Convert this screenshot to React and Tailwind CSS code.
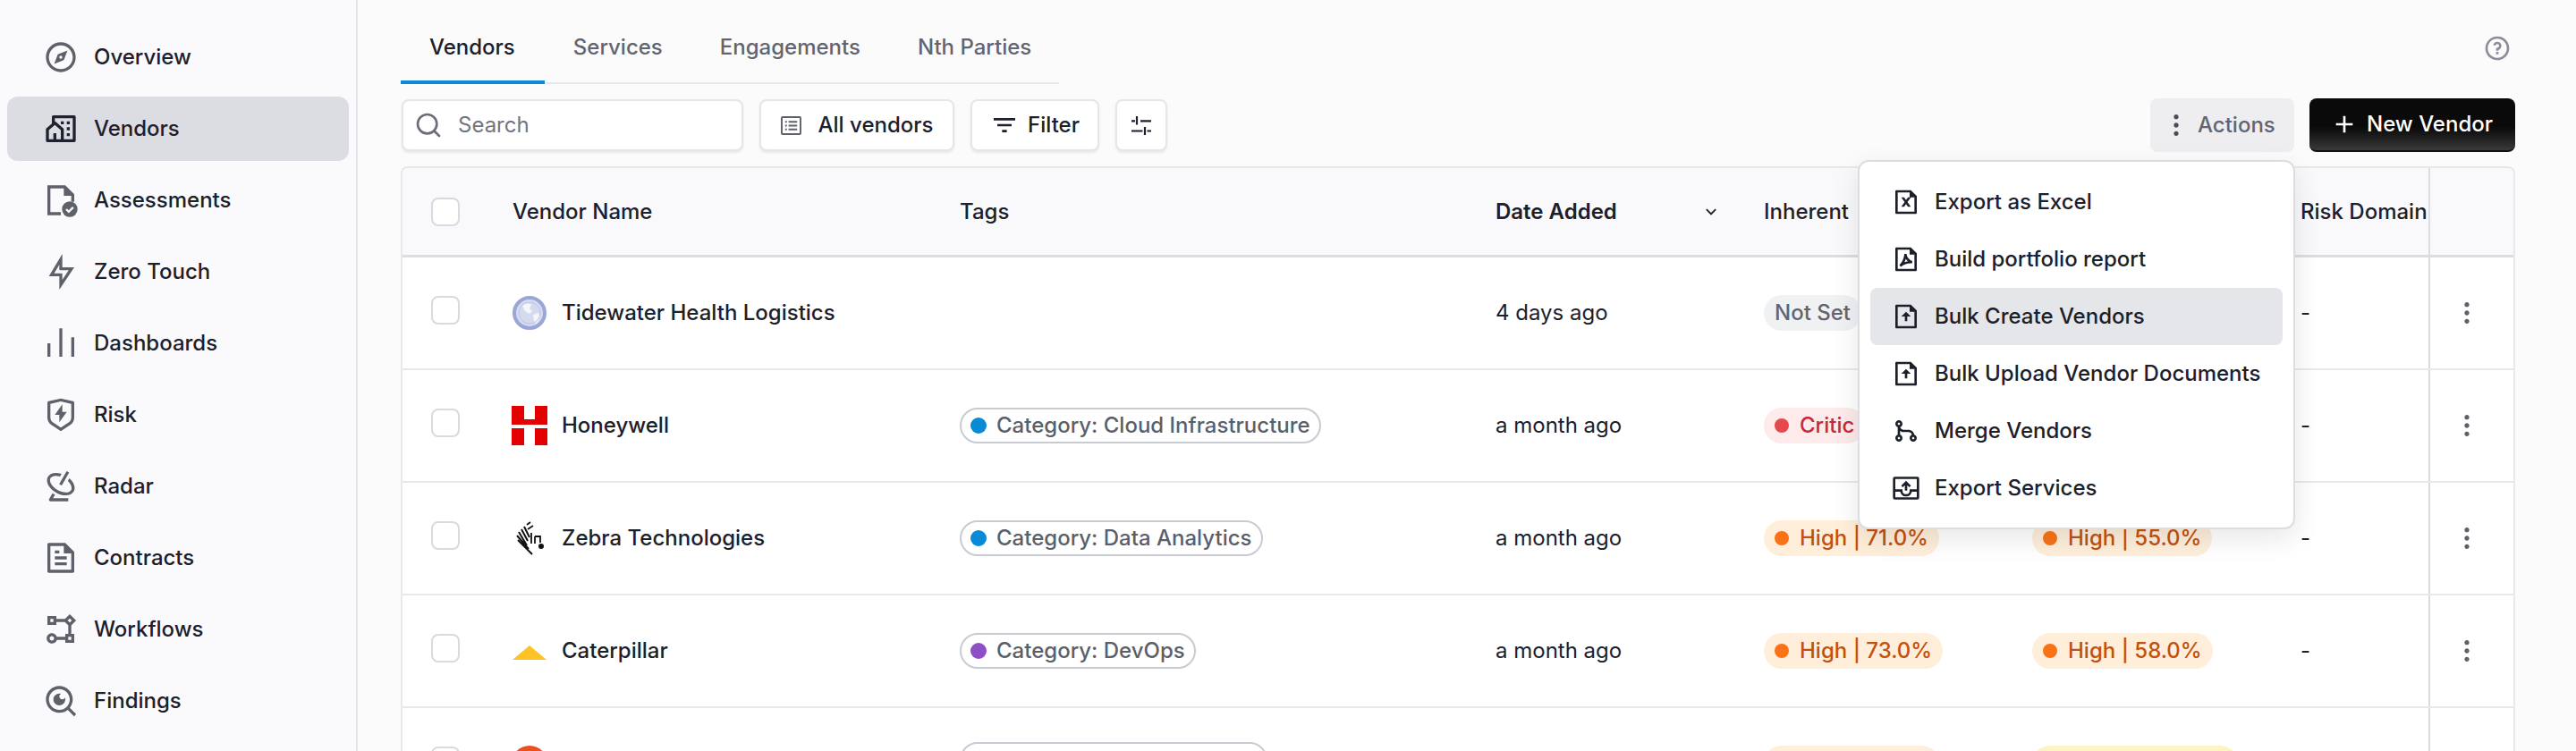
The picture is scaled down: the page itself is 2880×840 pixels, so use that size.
import React from "react";
import {
  RiCompass3Line, RiCommunityLine, RiFlashlightLine, RiBarChartLine, RiShieldFlashLine, RiRadarLine,
  RiFileTextLine, RiFlowChart, RiSearchEyeLine, RiFilter3Line,
  RiMore2Fill, RiAddLine, RiQuestionLine, RiArrowDownSLine, RiFileExcelLine, RiFilePdf2Line, RiFileUploadLine,
  RiGitMergeLine,
} from "react-icons/ri";
import { Search } from "lucide-react";

function AssessIcon({ className }) {
  return (
    <svg viewBox="0 0 24 24" className={className} fill="currentColor">
      <path d="M15 2l6 6v5h-2V9h-5V4H5v16h7v2H3V2z" />
      <circle cx="18" cy="18" r="5.2" />
      <path d="M15.6 18l1.7 1.7 3-3" fill="none" stroke="#fafafc" strokeWidth="1.4" />
    </svg>
  );
}

function ListBox({ className }) {
  return (
    <svg viewBox="0 0 24 22" className={className} fill="none" stroke="currentColor" strokeWidth="2">
      <rect x="1" y="1" width="22" height="20" rx="1" />
      <path d="M9 6.5h10M9 11h10M9 15.5h10" />
      <path d="M5 6.5h2M5 11h2M5 15.5h2" />
    </svg>
  );
}

function Sliders({ className }) {
  return (
    <svg viewBox="0 0 22 21" className={className} fill="none" stroke="currentColor" strokeWidth="2.2">
      <path d="M6 0v9.5M0 5.3h4M10 5.3h12" />
      <path d="M15 12v9M0 16.5h12.5M17.5 16.5H22" />
    </svg>
  );
}

function ExportBox({ className }) {
  return (
    <svg viewBox="0 0 24 24" className={className} fill="none" stroke="currentColor" strokeWidth="2">
      <rect x="2" y="3.4" width="20" height="17.2" rx="0.6" />
      <path d="M2 14h6a4 4 0 0 0 8 0h6" />
      <path d="M12 14V7.5M8.6 10.6L12 7.2l3.4 3.4" />
    </svg>
  );
}

const nav = [
  ["Overview", RiCompass3Line],
  ["Vendors", RiCommunityLine, true],
  ["Assessments", AssessIcon],
  ["Zero Touch", RiFlashlightLine],
  ["Dashboards", RiBarChartLine],
  ["Risk", RiShieldFlashLine],
  ["Radar", RiRadarLine],
  ["Contracts", RiFileTextLine],
  ["Workflows", RiFlowChart],
  ["Findings", RiSearchEyeLine],
];

const menu = [
  ["Export as Excel", RiFileExcelLine],
  ["Build portfolio report", RiFilePdf2Line],
  ["Bulk Create Vendors", RiFileUploadLine, true],
  ["Bulk Upload Vendor Documents", RiFileUploadLine],
  ["Merge Vendors", RiGitMergeLine],
  ["Export Services", ExportBox],
];

function Globe() {
  return (
    <svg viewBox="0 0 40 40" className="w-[40px] h-[40px]">
      <circle cx="20" cy="20" r="17" fill="#d5dbef" stroke="#9aa6d6" strokeWidth="4" />
      <path d="M12 12c4-3 8-3 10-1l-2 4 3 3-3 3-5-3zM24 22l6-2 2 4-4 8-3-3z" fill="#f4f6fb" />
      <circle cx="20" cy="20" r="12" fill="none" stroke="#bcc5e6" strokeWidth="1" />
    </svg>
  );
}
function HoneywellLogo() {
  return (
    <svg viewBox="0 0 40 44" className="w-[40px] h-[44px]">
      <path d="M0 0h14v15h12V0h14v21H0z" fill="#e30000" />
      <path d="M0 25h14v19H0zM26 25h14v19H26z" fill="#e30000" />
    </svg>
  );
}
function ZebraLogo() {
  return (
    <svg viewBox="0 0 40 40" className="w-[40px] h-[40px]">
      <g stroke="#111" fill="none" strokeWidth="2">
        <path d="M7 22l16 16M6 17l13 15M8 13l9 15M11 10l7 13M14 7l6 12" />
        <path d="M17 5l4-3M18 10l6-4M22 14v12M26 18v8M26 18h6v7" strokeWidth="1.8" />
      </g>
      <circle cx="33" cy="29" r="3" fill="#111" />
    </svg>
  );
}
function CatLogo() {
  return (
    <svg viewBox="0 0 40 44" className="w-[40px] h-[44px]">
      <path d="M20 16L39 32H1z" fill="#fdc223" />
    </svg>
  );
}
function OrangeLogo() {
  return (
    <svg viewBox="0 0 40 44" className="w-[40px] h-[44px]">
      <circle cx="20" cy="22" r="20" fill="#ef4e23" />
    </svg>
  );
}

function Check({ nudge }) {
  return <span className={"block w-[32px] h-[32px] rounded-lg border-2 border-[#d9dae0] bg-white " + (nudge ? "mb-[6px]" : "")} />;
}

function Tag({ color, text, width }) {
  return (
    <span
      className="inline-flex items-center h-[40px] rounded-full border-2 border-[#c9cbd3] pl-[10px] pr-[10px] text-[#5b5f6a] gap-[11px] whitespace-nowrap font-medium"
      style={width ? { width } : undefined}
    >
      {color && <span className={"w-[18px] h-[18px] rounded-full " + color} />}
      {text}
    </span>
  );
}

function Risk({ kind, text, width }) {
  const styles = {
    none: ["bg-[#f0f1f3] text-[#62656f]", ""],
    crit: ["bg-[#fdeaea] text-[#c9283a]", "bg-[#e5484d]"],
    high: ["bg-[#feeeda] text-[#c2510c]", "bg-[#f97316]"],
    med: ["bg-[#fef3c2] text-[#b7791f]", "bg-[#eab308]"],
  }[kind];
  return (
    <span
      className={"inline-flex items-center h-[40px] rounded-full px-[12px] gap-[12px] whitespace-nowrap font-medium " + styles[0]}
      style={width ? { width } : undefined}
    >
      {styles[1] && <span className={"w-[16px] h-[16px] rounded-full shrink-0 " + styles[1]} />}
      {text}
    </span>
  );
}

const rows = [
  { name: "Tidewater Health Logistics", Logo: Globe, date: "4 days ago", a: ["none", "Not Set"], dash: true },
  { name: "Honeywell", Logo: HoneywellLogo, tag: ["bg-[#0a8ad6]", "Category: Cloud Infrastructure"], date: "a month ago", a: ["crit", "Critic"], dash: true },
  { name: "Zebra Technologies", Logo: ZebraLogo, tag: ["bg-[#0a8ad6]", "Category: Data Analytics"], date: "a month ago", a: ["high", "High | 71.0%"], b: ["high", "High | 55.0%"], dash: true },
  { name: "Caterpillar", Logo: CatLogo, tag: ["bg-[#8e4ec6]", "Category: DevOps"], date: "a month ago", a: ["high", "High | 73.0%"], b: ["high", "High | 58.0%"], dash: true },
  { name: "", Logo: OrangeLogo, tagWidth: 344, date: "", a: ["high", "", 196], b: ["med", "", 230] },
];

const cols = "grid grid-cols-[123px_500px_599px_300px_300px_300px_143px_95px]";

export default function App() {
  return (
    <div className="flex h-[840px] overflow-hidden bg-[#fbfbfc] text-[24px] text-[#1c202b] font-['Inter',sans-serif] leading-[32px]">
      <aside className="w-[400px] shrink-0 h-full bg-[#fafafc] border-r-2 border-[#e4e4ea] pt-[28px] pl-[8px] pr-[8px] flex flex-col gap-[8px]">
        {nav.map(([label, Icon, active]) => (
          <div key={label} className={"flex items-center h-[72px] shrink-0 rounded-xl pl-[40px] gap-[17px] font-medium " + (active ? "bg-[#dcdde3]" : "")}>
            <Icon className={"w-[40px] h-[40px] " + (active ? "text-[#1f2330]" : "text-[#5e6169]")} />
            <span>{label}</span>
          </div>
        ))}
      </aside>

      <main className="relative flex-1 min-w-0 pl-[48px]">
        <div className="flex items-start justify-between pr-[68px]">
          <div className="flex w-[736px] h-[94px] pt-[16px] border-b-2 border-[#e8e8ec]">
            {["Vendors", "Services", "Engagements", "Nth Parties"].map((t, i) => (
              <div key={t} className={"-mb-[2px] h-[78px] flex items-center pl-[32px] border-b-4 font-medium whitespace-nowrap " + (i === 0 ? "pr-[33px] border-[#0a8ad6] text-[#1c202b]" : "pr-[32px] border-transparent text-[#62656f]")}>
                {t}
              </div>
            ))}
          </div>
          <RiQuestionLine className="w-[32px] h-[32px] text-[#8b8e98] mt-[38px] mr-[4px]" />
        </div>

        <div className="flex items-center justify-between h-[60px] mt-[16px] pl-px pr-[68px]">
          <div className="flex items-center gap-[18px]">
            <div className="flex items-center w-[382px] h-[58px] bg-white border-2 border-[#e6e6ea] rounded-lg shadow-[0_2px_3px_rgba(0,0,0,0.08)] pl-[12px] gap-[17px] text-[#72757f]">
              <Search className="w-[32px] h-[32px] text-[#6b6e78]" />
              <span>Search</span>
            </div>
            <div className="flex items-center justify-center w-[218px] h-[58px] bg-white border-2 border-[#e6e6ea] rounded-lg shadow-[0_2px_3px_rgba(0,0,0,0.08)] gap-[19px] font-medium">
              <ListBox className="w-[23px] h-[21px] text-[#5e6169]" />
              <span>All vendors</span>
            </div>
            <div className="flex items-center justify-center w-[144px] h-[58px] bg-white border-2 border-[#e6e6ea] rounded-lg shadow-[0_2px_3px_rgba(0,0,0,0.08)] gap-[10px] font-medium">
              <RiFilter3Line className="w-[32px] h-[32px] text-[#1c202b]" />
              <span>Filter</span>
            </div>
            <div className="flex items-center justify-center w-[58px] h-[58px] bg-white border-2 border-[#e6e6ea] rounded-lg shadow-[0_2px_3px_rgba(0,0,0,0.08)]">
              <Sliders className="w-[22px] h-[21px] text-[#1c202b]" />
            </div>
          </div>
          <div className="flex items-center gap-[17px]">
            <div className="flex items-center w-[161px] h-[60px] rounded-lg bg-[#eeeef1] pl-[13px] gap-[8px] text-[#62656f] font-medium">
              <RiMore2Fill className="w-[32px] h-[32px] text-[#4a4d57]" />
              <span>Actions</span>
            </div>
            <div className="flex items-center w-[230px] h-[60px] rounded-lg bg-gradient-to-b from-[#0a0a0a] from-55% to-[#3a3a3a] border-b-2 border-[#111] pl-[23px] gap-[9px] text-white font-medium">
              <RiAddLine className="w-[32px] h-[32px]" />
              <span>New Vendor</span>
            </div>
          </div>
        </div>

        <div className="mt-[16px] w-[2364px] bg-white border-x-2 border-t-2 border-[#e8e8ec] rounded-t-lg">
          <div className={cols + " h-[100px] bg-[#f9f9fb] border-b-[3px] border-[#dcdce1] font-medium items-center rounded-t-lg"}>
            <div className="pl-[32px]"><Check /></div>
            <div>Vendor Name</div>
            <div>Tags</div>
            <div className="flex items-center justify-between pr-[48px] font-semibold">
              <span>Date Added</span>
              <RiArrowDownSLine className="w-[22px] h-[22px] text-[#1c202b]" />
            </div>
            <div>Inherent</div>
            <div />
            <div className="whitespace-nowrap">Risk Domain</div>
            <div className="h-full border-l-2 border-[#dcdce1]" />
          </div>
          {rows.map((r, i) => (
            <div key={i} className={cols + " h-[126px] border-b-2 border-[#e8e8ec] items-center"}>
              <div className="pl-[32px]"><Check nudge /></div>
              <div className="flex items-center gap-[16px] font-medium -ml-px">
                <span className="w-[40px] flex justify-center"><r.Logo /></span>
                <span>{r.name}</span>
              </div>
              <div>
                {r.tag && <Tag color={r.tag[0]} text={r.tag[1]} />}
                {r.tagWidth && <Tag width={r.tagWidth} />}
              </div>
              <div>{r.date}</div>
              <div>{r.a && <Risk kind={r.a[0]} text={r.a[1]} width={r.a[2]} />}</div>
              <div>{r.b && <Risk kind={r.b[0]} text={r.b[1]} width={r.b[2]} />}</div>
              <div>{r.dash && "-"}</div>
              <div className="h-full flex items-center pl-[25px] border-l-2 border-[#d9d9de]">
                <RiMore2Fill className="w-[32px] h-[32px] text-[#5e6169]" />
              </div>
            </div>
          ))}
        </div>

        <div className="absolute left-[1677px] top-[179px] w-[489px] h-[413px] bg-white border-2 border-[#dcdde2] rounded-xl shadow-[0_10px_30px_rgba(20,20,40,0.10)] py-[13px] px-[12px] z-10">
          {menu.map(([label, Icon, active]) => (
            <div key={label} className={"flex items-center h-[64px] rounded-lg pl-[24px] gap-[16px] font-medium " + (active ? "bg-[#e5e6ea]" : "")}>
              <Icon className="w-[32px] h-[32px] text-[#1c202b]" />
              <span>{label}</span>
            </div>
          ))}
        </div>
      </main>
    </div>
  );
}
